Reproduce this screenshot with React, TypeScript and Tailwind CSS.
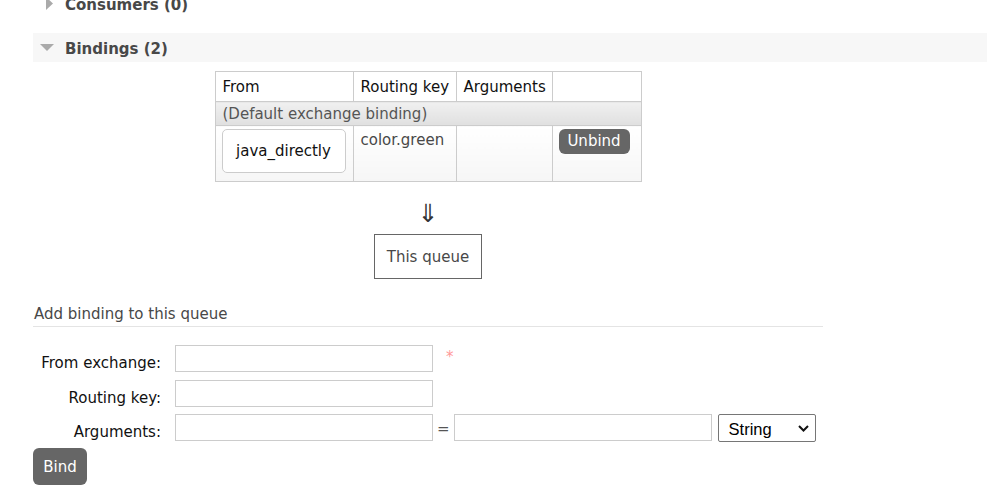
import React from "react";

export default function App() {
  return (
    <div className="w-[987px] h-[496px] overflow-hidden bg-white font-['DejaVu_Sans',sans-serif] text-[15px] leading-[18px] text-[#484848]">
      {/* Consumers header (cut off) */}
      <div className="ml-[33px] -mt-[10px] h-[29px] flex items-center">
        <svg width="7" height="13" viewBox="0 0 7 13" className="ml-[13px] mt-[-2px]">
          <polygon points="0,0 7,6.5 0,13" fill="#aaaaaa" />
        </svg>
        <span className="ml-[12px] font-bold">Consumers (0)</span>
      </div>

      {/* Bindings header */}
      <div className="ml-[33px] mt-[14px] h-[29px] bg-[#f7f7f7] flex items-center">
        <svg width="14" height="7" viewBox="0 0 14 7" className="ml-[7px] mt-[0px]">
          <polygon points="0,0 14,0 7,7" fill="#aaaaaa" />
        </svg>
        <span className="ml-[11px] mt-[2px] font-bold">Bindings (2)</span>
      </div>

      {/* Binding diagram */}
      <div className="ml-[33px] w-[790px] flex flex-col items-center">
        <table className="mt-[9px] border-collapse table-fixed w-[426px]">
          <colgroup>
            <col className="w-[138px]" />
            <col className="w-[103px]" />
            <col className="w-[96px]" />
            <col className="w-[89px]" />
          </colgroup>
          <thead>
            <tr className="h-[30px]">
              <th className="border border-[#cccccc] px-[7px] text-left font-normal text-[#111111] whitespace-nowrap">From</th>
              <th className="border border-[#cccccc] px-[7px] text-left font-normal text-[#111111] whitespace-nowrap">Routing key</th>
              <th className="border border-[#cccccc] px-[7px] text-left font-normal text-[#111111] whitespace-nowrap">Arguments</th>
              <th className="border border-[#cccccc] px-[7px]"></th>
            </tr>
          </thead>
          <tbody>
            <tr className="h-[24px]">
              <td colSpan={4} className="border border-[#cccccc] px-[7px] bg-linear-to-b from-[#f0f0f0] to-[#e0e0e0] text-[#555555] whitespace-nowrap">
                (Default exchange binding)
              </td>
            </tr>
            <tr className="h-[56px]">
              <td className="border border-[#cccccc] px-[6px] pt-[3px] pb-[7px] align-top bg-linear-to-b from-white to-[#f6f6f6]">
                <div className="w-[124px] h-[44px] border border-[#cccccc] rounded-[5px] bg-white flex items-center justify-center text-[#111111]">
                  java_directly
                </div>
              </td>
              <td className="border border-[#cccccc] px-[7px] pt-[5px] align-top bg-linear-to-b from-white to-[#f6f6f6] whitespace-nowrap">
                color.green
              </td>
              <td className="border border-[#cccccc] align-top bg-linear-to-b from-white to-[#f6f6f6]"></td>
              <td className="border border-[#cccccc] px-[6px] pt-[3px] align-top bg-linear-to-b from-white to-[#f6f6f6]">
                <button className="h-[25px] w-[71px] rounded-[6px] bg-[#666666] text-white leading-[25px]">Unbind</button>
              </td>
            </tr>
          </tbody>
        </table>

        <div className="mt-[17px] text-[25px] leading-[30px] text-[#333333]">⇓</div>

        <div className="mt-[5px] w-[108px] h-[45px] border border-[#666666] flex items-center justify-center">
          This queue
        </div>
      </div>

      {/* Add binding */}
      <div className="ml-[33px] w-[790px] mt-[26px]">
        <div className="pl-[1px] pb-[3px] border-b border-[#e4e4e4]">Add binding to this queue</div>

        <div className="mt-[18px] flex items-start">
          <div className="w-[128px] pt-[9px] text-right text-[#111111]">From exchange:</div>
          <div className="ml-[14px] w-[258px] h-[27px] border border-[#cccccc]"></div>
          <div className="ml-[13px] mt-[3px] text-[#ff9999] text-[15px]">*</div>
        </div>

        <div className="mt-[8px] flex items-start">
          <div className="w-[128px] pt-[9px] text-right text-[#111111]">Routing key:</div>
          <div className="ml-[14px] w-[258px] h-[27px] border border-[#cccccc]"></div>
        </div>

        <div className="mt-[7px] flex items-start">
          <div className="w-[128px] pt-[9px] text-right text-[#111111]">Arguments:</div>
          <div className="ml-[14px] w-[258px] h-[27px] border border-[#cccccc]"></div>
          <div className="mx-[4px] pt-[6px] text-[#555555]">=</div>
          <div className="w-[258px] h-[27px] border border-[#cccccc]"></div>
          <div className="ml-[6px] w-[98px] h-[28px] border border-[#767676] rounded-[2px] flex items-center justify-between pl-[10px] pr-[6px] pt-[1px] font-['Liberation_Sans',sans-serif] text-[16.5px] text-black">
            <span>String</span>
            <svg width="11" height="7" viewBox="0 0 11 7">
              <polyline points="1,1 5.5,5.5 10,1" fill="none" stroke="#111111" strokeWidth="2" />
            </svg>
          </div>
        </div>

        <button className="mt-[6px] w-[54px] h-[37px] rounded-[6px] bg-[#666666] text-white">Bind</button>
      </div>
    </div>
  );
}
